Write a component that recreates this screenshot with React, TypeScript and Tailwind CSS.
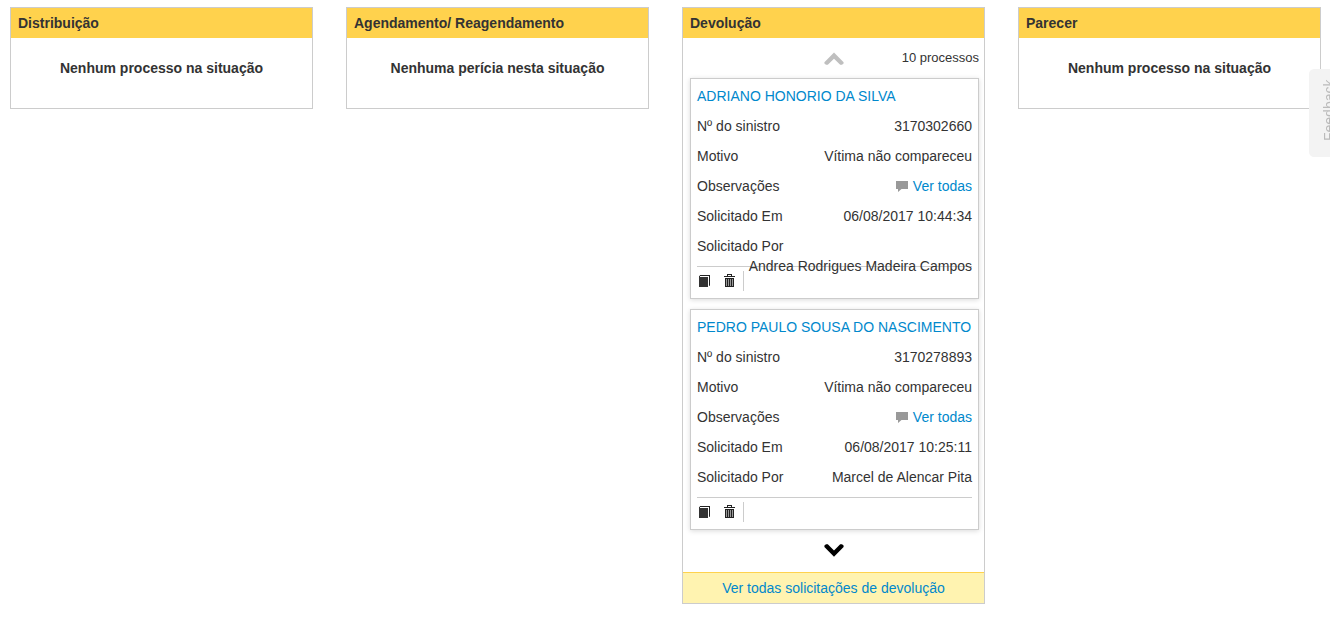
import type { ReactNode } from "react";

type Process = {
  name: string;
  claim: string;
  reason: string;
  requestedAt: string;
  requestedBy: string;
};

const processes: Process[] = [
  {
    name: "ADRIANO HONORIO DA SILVA",
    claim: "3170302660",
    reason: "Vítima não compareceu",
    requestedAt: "06/08/2017 10:44:34",
    requestedBy: "Andrea Rodrigues Madeira Campos",
  },
  {
    name: "PEDRO PAULO SOUSA DO NASCIMENTO",
    claim: "3170278893",
    reason: "Vítima não compareceu",
    requestedAt: "06/08/2017 10:25:11",
    requestedBy: "Marcel de Alencar Pita",
  },
];

function BookIcon() {
  return (
    <svg width="12" height="14" viewBox="0 0 12 14" aria-hidden="true">
      <path d="M0 2L1 1.5V3H9V13H0z" fill="#333" />
      <path d="M1 1h10v10.5l-1 .5V2H1z" fill="#222" />
    </svg>
  );
}

function TrashIcon() {
  return (
    <svg width="12" height="14" viewBox="0 0 12 14" shapeRendering="crispEdges" aria-hidden="true">
      <path d="M3 0h5v2h3v1H0V2h3zM4 1v1h3V1z" fill="#222" fillRule="evenodd" />
      <path d="M1 4h9v9H1z" fill="#222" />
      <path d="M2 5h1v7H2zM4 5h1v7H4zM6 5h1v7H6zM8 5h1v7H8z" fill="#999" />
    </svg>
  );
}

function CommentIcon() {
  return (
    <svg width="12" height="12" viewBox="0 0 12 12" aria-hidden="true">
      <path d="M0 1h12v8H5.5L2 12V9H0z" fill="#999" />
    </svg>
  );
}

function Chevron({ down = false }: { down?: boolean }) {
  return (
    <svg width="20" height="14" viewBox="0 0 20 14" aria-hidden="true">
      <path
        d={
          down
            ? "M10 12.8L.4 3V1.6L2 .2H3.8L10 6.5L16.200 .2H18L19.6 1.600V3z"
            : "M10 1.400L.4 11.200V12.600L2 13.800H3.800L10 7.700L16.200 13.800H18L19.600 12.600V11.200z"
        }
        fill={down ? "#000" : "#bfbfbf"}
      />
    </svg>
  );
}

function Column({ title, children }: { title: string; children: ReactNode }) {
  return (
    <section className="min-w-0 border border-[#ccc] bg-white">
      <h2 className="bg-[#ffd24d] px-[7px] py-[5px] font-bold">{title}</h2>
      {children}
    </section>
  );
}

function Empty({ children }: { children: ReactNode }) {
  return <p className="px-2 pt-5 pb-[30px] text-center font-bold">{children}</p>;
}

function Field({ label, children }: { label: string; children: ReactNode }) {
  return (
    <div className="my-[10px] flex h-5 flex-wrap content-start">
      <dt>{label}</dt>
      <dd className="ml-auto whitespace-nowrap">{children}</dd>
    </div>
  );
}

function Card({ process }: { process: Process }) {
  return (
    <article className="border border-[#ccc] bg-white px-[6px] py-[7px] shadow-[0_1px_5px_rgba(0,0,0,0.15)]">
      <h3 className="whitespace-nowrap">
        <a href="#processo" className="text-[#0088cc]">{process.name}</a>
      </h3>
      <dl>
        <Field label="Nº do sinistro">{process.claim}</Field>
        <Field label="Motivo">{process.reason}</Field>
        <Field label="Observações">
          <a href="#observacoes" className="flex items-center gap-[5px] text-[#0088cc]">
            <CommentIcon />
            Ver todas
          </a>
        </Field>
        <Field label="Solicitado Em">{process.requestedAt}</Field>
        <Field label="Solicitado Por">{process.requestedBy}</Field>
      </dl>
      <div className="flex border-t border-[#ccc] pt-1">
        <div className="flex h-5 items-center gap-[13px] border-r border-[#ccc] pr-[7px] pl-[2px]">
          <button type="button" aria-label="Abrir processo">
            <BookIcon />
          </button>
          <button type="button" aria-label="Excluir">
            <TrashIcon />
          </button>
        </div>
      </div>
    </article>
  );
}

export default function App() {
  return (
    <div className="font-['Liberation_Sans',Arial,sans-serif] text-sm leading-5 text-[#333]">
      <main className="grid grid-cols-4 items-start gap-[33px] pt-[7px] pr-[9px] pb-[14px] pl-[10px]">
        <Column title="Distribuição">
          <Empty>Nenhum processo na situação</Empty>
        </Column>
        <Column title="Agendamento/ Reagendamento">
          <Empty>Nenhuma perícia nesta situação</Empty>
        </Column>
        <Column title="Devolução">
          <div className="grid h-10 grid-cols-[1fr_auto_1fr] items-center px-[5px]">
            <button type="button" aria-label="Anteriores" disabled className="col-start-2">
              <Chevron />
            </button>
            <span className="text-right text-[13px]">10 processos</span>
          </div>
          <div className="flex flex-col gap-[10px] pr-[5px] pl-[7px]">
            {processes.map((process) => (
              <Card key={process.claim} process={process} />
            ))}
          </div>
          <div className="flex h-[42px] items-center justify-center">
            <button type="button" aria-label="Próximos">
              <Chevron down />
            </button>
          </div>
          <a
            href="#devolucao"
            className="block border-t border-[#ffd24d] bg-[#fff3b0] py-[5px] text-center text-[#0088cc]"
          >
            Ver todas solicitações de devolução
          </a>
        </Column>
        <Column title="Parecer">
          <Empty>Nenhum processo na situação</Empty>
        </Column>
      </main>
      <button
        type="button"
        className="fixed top-[69px] -right-5 h-[88px] w-[41px] rotate-180 rounded-r-[5px] bg-[#f3f3f3] pt-4 pb-[10px] text-[#bbb] [writing-mode:vertical-rl]"
      >
        Feedback
      </button>
    </div>
  );
}
